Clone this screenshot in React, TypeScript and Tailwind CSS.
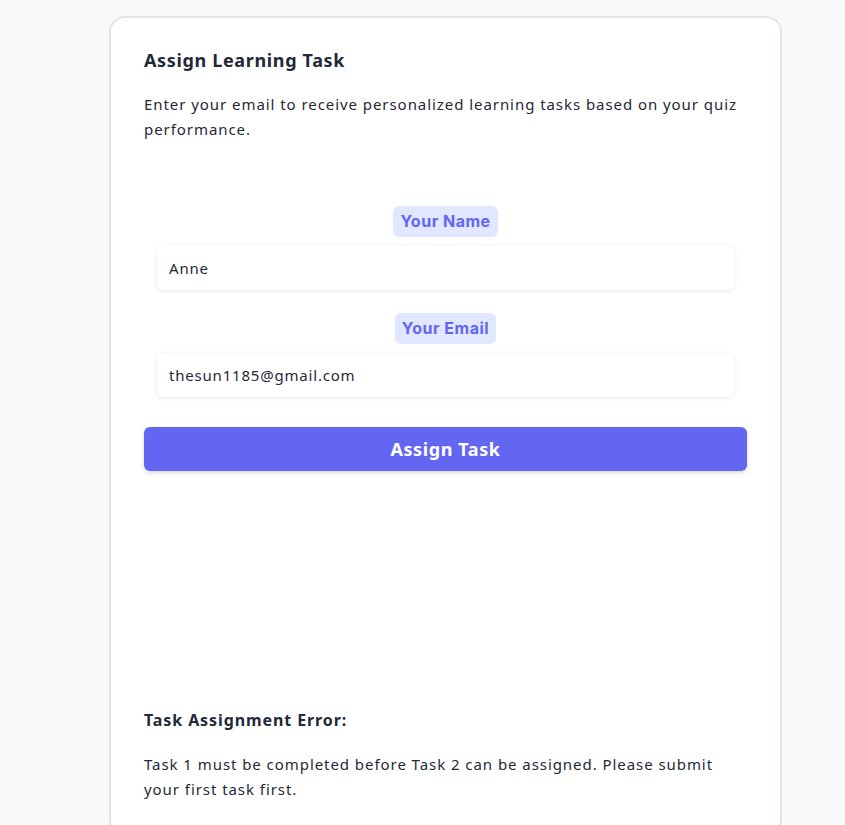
export default function App() {
  return (
    <div className="min-h-[825px] bg-[#f8f9fb] font-['Noto_Sans',sans-serif] text-[#1f2937]">
      <div className="w-[673px] pt-4 ml-[109px]">
        <div className="rounded-2xl border-2 border-[#e2e4e8] bg-white px-[33px] pt-[30px] pb-8 min-h-[820px]">
          <h2 className="text-[18px] font-bold leading-[24px] tracking-[0.65px]">Assign Learning Task</h2>
          <p className="mt-[20px] text-[15px] leading-[25px] tracking-[0.94px]">
            Enter your email to receive personalized learning tasks based on your quiz performance.
          </p>

          <div className="mt-[64px] flex flex-col items-center px-[13px]">
            <span className="rounded-md bg-[#e0e7ff] px-[7px] py-[4px] text-[16px] font-bold leading-[23px] text-[#6366f1] font-['Inter',sans-serif] tracking-[0.5px]">
              Your Name
            </span>
            <div className="mt-[9px] flex h-[44px] w-full items-center rounded-md bg-white px-3 text-[15px] tracking-[0.8px] shadow-[0_1px_4px_rgba(0,0,0,0.1)]">
              Anne
            </div>
            <span className="mt-[23px] rounded-md bg-[#e0e7ff] px-[7px] py-[4px] text-[16px] font-bold leading-[23px] text-[#6366f1] font-['Inter',sans-serif] tracking-[0.5px]">
              Your Email
            </span>
            <div className="mt-[9px] flex h-[44px] w-full items-center rounded-md bg-white px-3 text-[15px] tracking-[0.8px] shadow-[0_1px_4px_rgba(0,0,0,0.1)]">
              thesun1185@gmail.com
            </div>
          </div>

          <button className="mt-[30px] flex h-[44px] w-full items-center justify-center rounded-md bg-[#6366f1] text-[18px] font-bold tracking-[0.6px] text-white shadow-[0_2px_4px_rgba(0,0,0,0.15)]">
            Assign Task
          </button>

          <div className="mt-[237px]">
            <h3 className="text-[16px] font-bold leading-[24px] tracking-[0.9px]">Task Assignment Error:</h3>
            <p className="mt-[20px] text-[15px] leading-[25px] tracking-[0.94px] pr-[20px]">
              Task 1 must be completed before Task 2 can be assigned. Please submit your first task first.
            </p>
          </div>
        </div>
      </div>
    </div>
  );
}
